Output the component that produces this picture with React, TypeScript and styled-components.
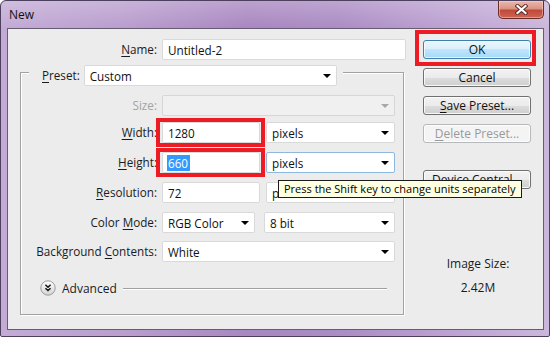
import React from 'react';
import styled, { createGlobalStyle } from 'styled-components';

const GlobalStyle = createGlobalStyle`
  html, body { margin: 0; padding: 0; background: #ffffff; }
  body {
    font-family: "Open Sans", "Noto Sans", Arial, sans-serif;
    font-size: 11.7px;
    color: #1b1b1b;
  }
`;

const Window = styled.div`
  position: relative;
  width: 550px;
  height: 337px;
  box-sizing: border-box;
  border: 1px solid #4d3f5e;
  border-radius: 6px 6px 2px 2px;
  background:
    linear-gradient(180deg, rgba(255, 255, 255, 0.22) 0px, rgba(255, 255, 255, 0) 27px),
    linear-gradient(90deg, #c3abd6 0%, #b99ece 22%, #a987c1 45%, #ab8cc4 62%, #bea4d3 84%, #cbb7db 100%);
  display: flex;
  flex-direction: column;
  overflow: hidden;
`;

const TitleBar = styled.div`
  height: 27px;
  flex: none;
  display: flex;
  align-items: flex-start;
  padding: 0 5px 0 8px;
`;

const Title = styled.div`
  font-size: 12px;
  line-height: 16px;
  padding-top: 6px;
  color: #111;
`;

const CloseButton = styled.div`
  margin-left: auto;
  width: 46px;
  height: 18px;
  box-sizing: border-box;
  border: 1px solid #6b2b26;
  border-top: none;
  border-radius: 0 0 5px 5px;
  background: linear-gradient(180deg, #e9b9ae 0%, #d99384 45%, #c2493a 55%, #cd6757 100%);
  box-shadow: inset 0 0 0 1px rgba(255, 220, 210, 0.45);
  display: flex;
  align-items: center;
  justify-content: center;
`;

const Body = styled.div`
  flex: 1;
  display: flex;
  padding: 0 5px 6px 6px;
  min-height: 0;
`;

const Client = styled.div`
  flex: 1;
  display: flex;
  align-items: flex-start;
  border: 1px solid #675d72;
  background: #ececec;
  padding: 10px 0 0 12px;
`;

const LeftCol = styled.div`
  width: 387px;
  display: flex;
  flex-direction: column;
`;

const NameRow = styled.div`
  display: grid;
  grid-template-columns: 137px 244px;
  column-gap: 5px;
  align-items: center;
`;

const Label = styled.div<{ $disabled?: boolean }>`
  text-align: right;
  white-space: nowrap;
  color: ${(p) => (p.$disabled ? '#a3a3a3' : '#1b1b1b')};
  line-height: 15px;
`;

const Accel = styled.span`
  text-decoration: underline;
  text-underline-offset: 2px;
`;

const Field = styled.div<{ $w?: number; $focus?: boolean; $disabled?: boolean }>`
  height: 21px;
  width: ${(p) => (p.$w ? `${p.$w}px` : 'auto')};
  box-sizing: border-box;
  border: 1px solid ${(p) => (p.$focus ? '#8fb8e0' : p.$disabled ? '#d6d6d6' : '#d9d9d9')};
  border-radius: 2px;
  background: ${(p) => (p.$disabled ? '#f0f0f0' : '#ffffff')};
  display: flex;
  align-items: center;
  padding: 0 5px 0 5px;
  white-space: nowrap;
  color: #111;
  flex: none;
`;

const FlagBox = styled.div`
  border: 4px solid #ed1c24;
  margin: -4px -5px -4px -6px;
  padding: 0 1px 0 2px;
  display: flex;
  flex: none;
`;

const Arrow = styled.span<{ $disabled?: boolean }>`
  margin-left: auto;
  width: 0;
  height: 0;
  border-left: 4px solid transparent;
  border-right: 4px solid transparent;
  border-top: 4px solid ${(p) => (p.$disabled ? '#a8a8a8' : '#000')};
`;

const Selected = styled.span`
  background: #3399ff;
  color: #fff;
  padding: 0 2px 0 1px;
  margin-left: -1px;
  line-height: 16px;
`;

const Group = styled.div`
  margin-top: 12px;
  width: 384px;
  box-sizing: border-box;
  border: 1px solid #a2a2a2;
  box-shadow: inset 1px 1px 0 #fff, 1px 1px 0 #fff;
  display: flex;
  flex-direction: column;
  padding-bottom: 18px;
`;

const Legend = styled.div`
  margin: -8px 0 0 8px;
  align-self: flex-start;
  display: flex;
  align-items: center;
  gap: 4px;
  background: #ececec;
  padding: 0 6px 0 13px;
`;

const Row = styled.div<{ $mt: number }>`
  margin-top: ${(p) => p.$mt}px;
  display: grid;
  grid-template-columns: 136px 233px;
  column-gap: 5px;
  align-items: center;
`;

const Pair = styled.div<{ $gap: number }>`
  display: flex;
  gap: ${(p) => p.$gap}px;
`;

const AdvancedRow = styled.div`
  margin-top: 18px;
  height: 16px;
  display: flex;
  align-items: center;
  padding: 0 16px 0 19px;
`;

const AdvancedText = styled.span`
  margin-left: 6px;
  font-size: 12px;
  color: #1b1b1b;
`;

const Rule = styled.div`
  flex: 1;
  height: 1px;
  background: #a0a0a0;
  margin-left: 6px;
  box-shadow: 0 1px 0 #fff;
`;

const RightCol = styled.div`
  margin-left: 16px;
  width: 108px;
  display: flex;
  flex-direction: column;
  align-items: stretch;
`;

const RedFrame = styled.div`
  margin: -9px -5px -7px -8px;
  border: 4px solid #ed1c24;
  padding: 6px 1px 3px 4px;
  display: flex;
  flex-direction: column;
`;

const Button = styled.div<{ $mt?: number; $variant?: 'default' | 'disabled' | 'normal' }>`
  margin-top: ${(p) => p.$mt ?? 0}px;
  height: 19px;
  box-sizing: border-box;
  border-radius: 3px;
  display: flex;
  align-items: center;
  justify-content: center;
  white-space: nowrap;
  font-size: 12px;
  border: 1px solid
    ${(p) => (p.$variant === 'default' ? '#3c7fb1' : p.$variant === 'disabled' ? '#b5b9bc' : '#707070')};
  color: ${(p) => (p.$variant === 'disabled' ? '#9a9a9a' : '#111')};
  background: ${(p) =>
    p.$variant === 'default'
      ? 'linear-gradient(180deg, #eaf6fd 0%, #d9f0fc 50%, #bee6fd 50%, #a7d9f5 100%)'
      : p.$variant === 'disabled'
      ? '#f4f4f4'
      : 'linear-gradient(180deg, #f2f2f2 0%, #ebebeb 50%, #dddddd 50%, #cfcfcf 100%)'};
  box-shadow: inset 0 0 0 1px
    ${(p) => (p.$variant === 'default' ? 'rgba(255,255,255,0.7)' : 'rgba(255,255,255,0.8)')};
`;

const Info = styled.div<{ $mt: number }>`
  margin-top: ${(p) => p.$mt}px;
  text-align: center;
  font-size: 12px;
  line-height: 15px;
  color: #1b1b1b;
  padding-left: 2px;
`;

const Tooltip = styled.div`
  position: absolute;
  left: 277px;
  top: 179px;
  height: 18px;
  box-sizing: border-box;
  border: 1px solid #1a1a1a;
  background: #ffffe1;
  padding: 0 5px;
  line-height: 16px;
  font-size: 11px;
  color: #000;
  white-space: nowrap;
`;

const AdvancedIcon = () => (
  <svg width="16" height="16" viewBox="0 0 16 16">
    <defs>
      <linearGradient id="advg" x1="0" y1="0" x2="0" y2="1">
        <stop offset="0" stopColor="#ffffff" />
        <stop offset="1" stopColor="#d2d2d2" />
      </linearGradient>
    </defs>
    <circle cx="8" cy="8" r="7.2" fill="url(#advg)" stroke="#9c9c9c" strokeWidth="1" />
    <path d="M5.4 4.8 L8 7.2 L10.6 4.8 M5.4 8.2 L8 10.6 L10.6 8.2" fill="none" stroke="#111" strokeWidth="1.4" />
  </svg>
);

const CloseX = () => (
  <svg width="13" height="11" viewBox="0 0 13 11">
    <path d="M2.5 2 L10.5 9 M10.5 2 L2.5 9" stroke="#5a2a26" strokeWidth="4" strokeLinecap="square" />
    <path d="M2.5 2 L10.5 9 M10.5 2 L2.5 9" stroke="#ffffff" strokeWidth="2.2" strokeLinecap="square" />
  </svg>
);

export default function App() {
  return (
    <>
      <GlobalStyle />
      <Window>
        <TitleBar>
          <Title>New</Title>
          <CloseButton>
            <CloseX />
          </CloseButton>
        </TitleBar>
        <Body>
          <Client>
            <LeftCol>
              <NameRow>
                <Label>
                  <Accel>N</Accel>ame:
                </Label>
                <Field>Untitled-2</Field>
              </NameRow>
              <Group>
                <Legend>
                  <Label>
                    <Accel>P</Accel>reset:
                  </Label>
                  <Field $w={253}>
                    Custom
                    <Arrow />
                  </Field>
                </Legend>
                <Row $mt={9}>
                  <Label $disabled>Size:</Label>
                  <Field $disabled>
                    <Arrow $disabled />
                  </Field>
                </Row>
                <Row $mt={6}>
                  <Label>
                    <Accel>W</Accel>idth:
                  </Label>
                  <Pair $gap={6}>
                    <FlagBox>
                      <Field $w={98}>1280</Field>
                    </FlagBox>
                    <Field $w={129}>
                      pixels
                      <Arrow />
                    </Field>
                  </Pair>
                </Row>
                <Row $mt={9}>
                  <Label>
                    <Accel>H</Accel>eight:
                  </Label>
                  <Pair $gap={6}>
                    <FlagBox>
                      <Field $w={98}>
                        <Selected>660</Selected>
                      </Field>
                    </FlagBox>
                    <Field $w={129} $focus>
                      pixels
                      <Arrow />
                    </Field>
                  </Pair>
                </Row>
                <Row $mt={9}>
                  <Label>
                    <Accel>R</Accel>esolution:
                  </Label>
                  <Pair $gap={6}>
                    <Field $w={98}>72</Field>
                    <Field $w={129}>
                      pixels/inch
                      <Arrow />
                    </Field>
                  </Pair>
                </Row>
                <Row $mt={9}>
                  <Label>
                    Color <Accel>M</Accel>ode:
                  </Label>
                  <Pair $gap={9}>
                    <Field $w={93}>
                      RGB Color
                      <Arrow />
                    </Field>
                    <Field $w={131}>
                      8 bit
                      <Arrow />
                    </Field>
                  </Pair>
                </Row>
                <Row $mt={8}>
                  <Label>
                    Background <Accel>C</Accel>ontents:
                  </Label>
                  <Field>
                    White
                    <Arrow />
                  </Field>
                </Row>
                <AdvancedRow>
                  <AdvancedIcon />
                  <AdvancedText>Advanced</AdvancedText>
                  <Rule />
                </AdvancedRow>
              </Group>
            </LeftCol>
            <RightCol>
              <RedFrame>
                <Button $variant="default">OK</Button>
              </RedFrame>
              <Button $mt={9}>Cancel</Button>
              <Button $mt={9}>
                <span>
                  <Accel>S</Accel>ave Preset...
                </span>
              </Button>
              <Button $mt={9} $variant="disabled">
                <span>
                  <Accel>D</Accel>elete Preset...
                </span>
              </Button>
              <Button $mt={27}>
                <span>
                  De<Accel>v</Accel>ice Central...
                </span>
              </Button>
              <Info $mt={67}>Image Size:</Info>
              <Info $mt={9}>2.42M</Info>
            </RightCol>
          </Client>
        </Body>
        <Tooltip>Press the Shift key to change units separately</Tooltip>
      </Window>
    </>
  );
}
